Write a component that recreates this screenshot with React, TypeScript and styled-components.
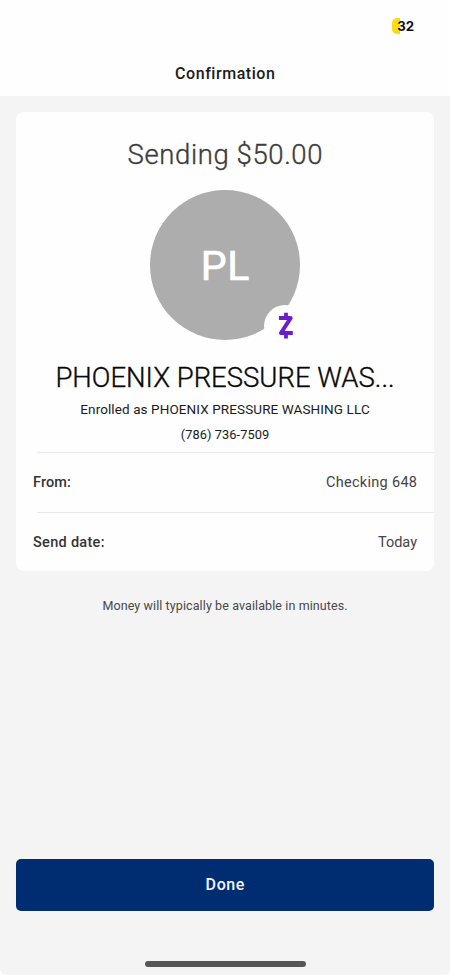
import React from "react";
import styled, { createGlobalStyle } from "styled-components";

const GlobalStyle = createGlobalStyle`
  * { box-sizing: border-box; }
  html, body { margin: 0; background: #fff; }
  body { font-family: Roboto, "Liberation Sans", sans-serif; color: #1b1b1b; }
`;

const Screen = styled.div`
  width: 450px;
  height: 975px;
  display: flex;
  flex-direction: column;
  overflow: hidden;
  background: #fefefe;
`;

const StatusBar = styled.div`
  height: 50px;
  flex: none;
  display: flex;
  justify-content: flex-end;
  padding: 18px 36px 0 0;
`;

const Battery = styled.div`
  width: 22px;
  height: 16px;
  border-radius: 5px;
  background: linear-gradient(to right, #fbdb14 8px, transparent 8px);
  font: 700 13.2px/16px Inter, sans-serif;
  color: #111;
  text-align: right;
  white-space: nowrap;
`;

const Header = styled.header`
  height: 46px;
  flex: none;
  display: flex;
  align-items: center;
  justify-content: center;
  padding-top: 2px;
`;

const Text = styled.span<{
  $size: number;
  $track?: number;
  $weight?: number;
  $color?: string;
  $stroke?: number;
}>`
  font-size: ${(p) => p.$size}px;
  line-height: 1.2;
  letter-spacing: ${(p) => p.$track ?? 0}px;
  margin-right: ${(p) => -(p.$track ?? 0)}px;
  font-weight: ${(p) => p.$weight ?? 400};
  color: ${(p) => p.$color ?? "#1b1b1b"};
  -webkit-text-stroke: ${(p) => p.$stroke ?? 0}px currentColor;
  white-space: nowrap;
`;

const Content = styled.main`
  flex: 1;
  display: flex;
  flex-direction: column;
  padding: 16px 16px 0;
  background: #f4f4f4;
  border-radius: 0 0 6px 6px;
`;

const Card = styled.section`
  height: 459px;
  flex: none;
  display: flex;
  flex-direction: column;
  border-radius: 8px;
  background: #fefefe;
`;

const Recipient = styled.div`
  height: 340px;
  flex: none;
  display: flex;
  flex-direction: column;
  align-items: center;
`;

const Line = styled.div<{ $height: number; $top?: number }>`
  height: ${(p) => p.$height}px;
  padding-top: ${(p) => p.$top ?? 0}px;
  flex: none;
  display: flex;
  align-items: center;
`;

const Avatar = styled.div`
  position: relative;
  width: 150px;
  height: 150px;
  flex: none;
  display: flex;
  align-items: center;
  justify-content: center;
  padding-top: 3px;
  border-radius: 50%;
  background: #adadad;
`;

const Badge = styled.div`
  position: absolute;
  left: 114px;
  top: 115px;
  width: 42px;
  height: 42px;
  border-radius: 50%;
  background: #fefefe;
`;

const Row = styled.div`
  flex: 1;
  display: flex;
  align-items: center;
  justify-content: space-between;
  padding: 2px 17px 0;
  background: linear-gradient(#e9e9e9, #e9e9e9) 21px 0 / 100% 1px no-repeat;
`;

const Note = styled.div`
  display: flex;
  justify-content: center;
  margin-top: 27px;
`;

const DoneButton = styled.button`
  height: 52px;
  flex: none;
  margin-top: auto;
  display: flex;
  align-items: center;
  justify-content: center;
  border: 0;
  padding: 1px 0 0;
  border-radius: 5px;
  background: #002d72;
  font-family: inherit;
`;

const HomeArea = styled.div`
  height: 64.5px;
  flex: none;
  display: flex;
  justify-content: center;
  align-items: flex-end;
  padding-bottom: 8.5px;
`;

const HomeIndicator = styled.div`
  width: 161px;
  height: 5.5px;
  border-radius: 3px;
  background: #565656;
`;

const ZelleMark = () => (
  <svg width="42" height="42" viewBox="0 0 42 42" fill="none" stroke="#6b1ccf" strokeLinejoin="round">
    <path d="M15 13.1H26.6L17 28H28.8" strokeWidth="4" strokeLinecap="butt" />
    <path d="M22 7.8V13M22 28V33.6" strokeWidth="3.8" />
  </svg>
);

export default function App() {
  return (
    <>
      <GlobalStyle />
      <Screen>
        <StatusBar>
          <Battery>32</Battery>
        </StatusBar>
        <Header>
          <Text $size={16} $weight={500} $track={0.55}>Confirmation</Text>
        </Header>
        <Content>
          <Card>
            <Recipient>
              <Line $height={78} $top={6}>
                <Text $size={27.5} $weight={300} $track={0.6} $stroke={0.35} $color="#3c3c3c">Sending $50.00</Text>
              </Line>
              <Avatar>
                <Text $size={41} $track={0.6} $stroke={0.7} $color="#fff">PL</Text>
                <Badge>
                  <ZelleMark />
                </Badge>
              </Avatar>
              <Line $height={57} $top={18}>
                <Text $size={27.5} $weight={300} $track={0} $stroke={0.35} $color="#080808">PHOENIX PRESSURE WAS...</Text>
              </Line>
              <Line $height={25}>
                <Text $size={13.5} $track={0.1}>Enrolled as PHOENIX PRESSURE WASHING LLC</Text>
              </Line>
              <Line $height={25}>
                <Text $size={12.8} $track={0.08}>(786) 736-7509</Text>
              </Line>
            </Recipient>
            <Row>
              <Text $size={14.5} $weight={500} $track={0.1} $color="#343434">From:</Text>
              <Text $size={14.5} $track={0.3} $color="#444">Checking 648</Text>
            </Row>
            <Row>
              <Text $size={14.5} $weight={500} $track={0.3} $color="#343434">Send date:</Text>
              <Text $size={14.5} $track={0} $color="#444">Today</Text>
            </Row>
          </Card>
          <Note>
            <Text $size={12.5} $track={0.1} $color="#484848">Money will typically be available in minutes.</Text>
          </Note>
          <DoneButton>
            <Text $size={16} $weight={500} $track={0.6} $color="#f0f5fc">Done</Text>
          </DoneButton>
          <HomeArea>
            <HomeIndicator />
          </HomeArea>
        </Content>
      </Screen>
    </>
  );
}
